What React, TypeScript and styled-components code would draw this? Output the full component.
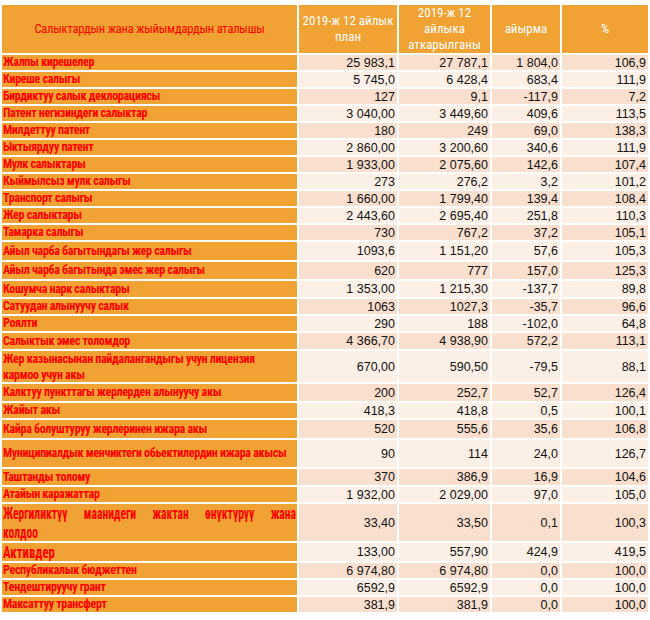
import styled, { createGlobalStyle } from "styled-components";

const GlobalStyle = createGlobalStyle`
  body {
    margin: 0;
    background: #fff;
  }
`;

const ORANGE = "#f0a232";
const PEACH_DARK = "#f9dfcd";
const PEACH_LIGHT = "#fcefe6";
const NARROW = `"Roboto Condensed", "Arial Narrow", "Liberation Sans Narrow", Roboto, sans-serif`;

const Sheet = styled.div`
  display: flex;
  flex-direction: column;
  gap: 2px;
  padding: 5px 2px 0 2px;
  width: 648px;
  box-sizing: border-box;
`;

const Row = styled.div<{ $h: number }>`
  display: grid;
  grid-template-columns: 295px 98px 91px 68px 86px;
  column-gap: 2px;
  height: ${(p) => p.$h}px;
`;

const HeadCell = styled.div<{ $red?: boolean }>`
  background: ${ORANGE};
  color: ${(p) => (p.$red ? "#ff0000" : "#fff")};
  font-family: ${NARROW};
  font-stretch: condensed;
  font-size: ${(p) => (p.$red ? 12.5 : 13)}px;
  letter-spacing: ${(p) => (p.$red ? -0.2 : 0)}px;
  line-height: 16px;
  display: flex;
  align-items: center;
  justify-content: center;
  text-align: center;
  padding: 0 2px;
`;

const NameCell = styled.div<{ $size: number; $lh: number }>`
  background: ${ORANGE};
  color: #ff0000;
  font-family: ${NARROW};
  font-stretch: condensed;
  font-weight: bold;
  font-size: ${(p) => p.$size}px;
  letter-spacing: -0.3px;
  line-height: ${(p) => p.$lh}px;
  display: flex;
  align-items: center;
  padding: 0 1px;
  overflow: hidden;
  white-space: pre-line;
`;

const Stretched = styled.span<{ $scale: number; $justify?: boolean }>`
  display: block;
  flex: none;
  width: calc(293px / ${(p) => p.$scale});
  transform: scaleX(${(p) => p.$scale});
  transform-origin: left center;
  letter-spacing: 0;
  text-align: ${(p) => (p.$justify ? "justify" : "left")};
  text-align-last: ${(p) => (p.$justify ? "justify" : "auto")};
`;

const NumCell = styled.div<{ $dark: boolean }>`
  background: ${(p) => (p.$dark ? PEACH_DARK : PEACH_LIGHT)};
  color: #111;
  font-family: "Liberation Sans", Arial, sans-serif;
  font-size: 12.5px;
  display: flex;
  align-items: center;
  justify-content: flex-end;
  padding-right: 2px;
  white-space: nowrap;
`;

type Line = {
  name: string;
  v: [string, string, string, string];
  h: number;
  size?: number;
  lh?: number;
  scale?: number;
  justify?: boolean;
};

const s = (t: string) => t.replace(/ /g, "\u00a0");

const lines: Line[] = [
  { name: "Жалпы кирешелер", v: ["25 983,1", "27 787,1", "1 804,0", "106,9"], h: 15 },
  { name: "Киреше салыгы", v: ["5 745,0", "6 428,4", "683,4", "111,9"], h: 15 },
  { name: "Бирдиктуу салык деклорациясы", v: ["127", "9,1", "-117,9", "7,2"], h: 15 },
  { name: "Патент негизиндеги салыктар", v: ["3 040,00", "3 449,60", "409,6", "113,5"], h: 15 },
  { name: "Милдеттуу патент", v: ["180", "249", "69,0", "138,3"], h: 15 },
  { name: "Ыктыярдуу патент", v: ["2 860,00", "3 200,60", "340,6", "111,9"], h: 15 },
  { name: "Мулк салыктары", v: ["1 933,00", "2 075,60", "142,6", "107,4"], h: 15 },
  { name: "Кыймылсыз мулк салыгы", v: ["273", "276,2", "3,2", "101,2"], h: 15 },
  { name: "Транспорт салыгы", v: ["1 660,00", "1 799,40", "139,4", "108,4"], h: 15 },
  { name: "Жер салыктары", v: ["2 443,60", "2 695,40", "251,8", "110,3"], h: 15 },
  { name: "Тамарка салыгы", v: ["730", "767,2", "37,2", "105,1"], h: 15 },
  { name: "Айыл чарба багытындагы жер салыгы", v: ["1093,6", "1 151,20", "57,6", "105,3"], h: 18 },
  { name: "Айыл чарба багытында эмес жер салыгы", v: ["620", "777", "157,0", "125,3"], h: 17 },
  { name: "Кошумча нарк салыктары", v: ["1 353,00", "1 215,30", "-137,7", "89,8"], h: 16 },
  { name: "Сатуудан алынуучу салык", v: ["1063", "1027,3", "-35,7", "96,6"], h: 15 },
  { name: "Роялти", v: ["290", "188", "-102,0", "64,8"], h: 15 },
  { name: "Салыктык эмес толомдор", v: ["4 366,70", "4 938,90", "572,2", "113,1"], h: 16 },
  {
    name: "Жер казынасынан пайдалангандыгы учун лицензия\nкармоо учун акы",
    v: ["670,00", "590,50", "-79,5", "88,1"],
    h: 31,
    lh: 16,
  },
  { name: "Калктуу пункттагы жерлерден алынуучу акы", v: ["200", "252,7", "52,7", "126,4"], h: 17 },
  { name: "Жайыт акы", v: ["418,3", "418,8", "0,5", "100,1"], h: 15 },
  { name: "Кайра болуштуруу жерлеринен ижара акы", v: ["520", "555,6", "35,6", "106,8"], h: 18 },
  {
    name: "Муниципиалдык менчиктеги обьектилердин ижара акысы",
    v: ["90", "114", "24,0", "126,7"],
    h: 27,
  },
  { name: "Таштанды толому", v: ["370", "386,9", "16,9", "104,6"], h: 16 },
  { name: "Атайын каражаттар", v: ["1 932,00", "2 029,00", "97,0", "105,0"], h: 15 },
  {
    name: "Жергиликтүү маанидеги жактан өнүктүрүү жана\nколдоо",
    v: ["33,40", "33,50", "0,1", "100,3"],
    h: 37,
    size: 17,
    lh: 19,
    scale: 0.68,
    justify: true,
  },
  { name: "Активдер", v: ["133,00", "557,90", "424,9", "419,5"], h: 18, size: 17, scale: 0.75 },
  { name: "Республикалык бюджеттен", v: ["6 974,80", "6 974,80", "0,0", "100,0"], h: 15 },
  { name: "Тендештируучу грант", v: ["6592,9", "6592,9", "0,0", "100,0"], h: 15 },
  { name: "Максаттуу трансферт", v: ["381,9", "381,9", "0,0", "100,0"], h: 15 },
];

export default function App() {
  return (
    <>
      <GlobalStyle />
      <Sheet>
        <Row $h={48}>
          <HeadCell $red>Салыктардын жана жыйымдардын аталышы</HeadCell>
          <HeadCell>2019-ж 12 айлык план</HeadCell>
          <HeadCell>2019-ж 12 айлыка аткарылганы</HeadCell>
          <HeadCell>айырма</HeadCell>
          <HeadCell>%</HeadCell>
        </Row>
        {lines.map((l, i) => (
          <Row key={l.name} $h={l.h}>
            <NameCell $size={l.size ?? 12} $lh={l.lh ?? 15}>
              {l.scale ? (
                <Stretched $scale={l.scale} $justify={l.justify}>
                  {l.name}
                </Stretched>
              ) : (
                l.name
              )}
            </NameCell>
            {l.v.map((v, j) => (
              <NumCell key={j} $dark={i % 2 === 0}>
                {s(v)}
              </NumCell>
            ))}
          </Row>
        ))}
      </Sheet>
    </>
  );
}
